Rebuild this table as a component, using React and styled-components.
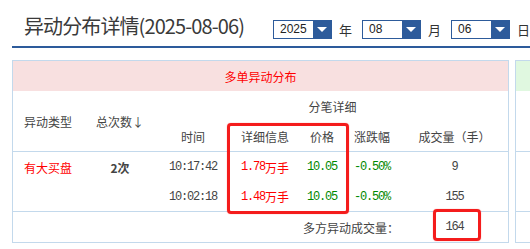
import React from 'react';
import styled, { createGlobalStyle } from 'styled-components';

const GlobalStyle = createGlobalStyle`
    html, body {
        margin: 0;
        padding: 0;
        background: #fff;
        overflow: hidden;
    }
    body {
        width: 530px;
        height: 249px;
        font-family: "Noto Sans CJK SC", sans-serif;
        color: #333;
    }
`;

const BLUE = '#2d5b9b';
const LINE = '#c3d9ec';

const Header = styled.div`
    display: flex;
    align-items: flex-start;
    height: 46px;
    margin-left: 12px;
    padding-left: 12px;
    border-bottom: 2px solid ${BLUE};
    white-space: nowrap;
`;

const Title = styled.h1`
    margin: 12px 0 0;
    font-size: 20px;
    line-height: 28px;
    font-weight: normal;
    letter-spacing: -0.9px;
    color: #3a3a3a;
    font-family: "Noto Sans CJK SC", sans-serif;
`;

const Pickers = styled.div`
    display: flex;
    align-items: center;
    margin: 20px 0 0 29px;
`;

const Select = styled.div`
    box-sizing: border-box;
    display: flex;
    width: 59px;
    height: 19px;
    border: 1px solid ${BLUE};
    background: #fff;
`;

const SelectValue = styled.span`
    flex: 1;
    padding-left: 6px;
    font-family: "Liberation Sans", sans-serif;
    font-size: 12px;
    line-height: 17px;
    color: #222;
`;

const SelectArrow = styled.span`
    width: 18px;
    display: flex;
    align-items: center;
    justify-content: center;
    background: ${BLUE};

    &::after {
        content: '';
        border-left: 5px solid transparent;
        border-right: 5px solid transparent;
        border-top: 5px solid #fff;
    }
`;

const Unit = styled.span`
    font-size: 13px;
    line-height: 19px;
    color: #333;
    margin: 0 10px 0 7px;

    &:last-child {
        margin-right: 0;
    }
`;

const Panels = styled.div`
    display: flex;
    gap: 6px;
    margin: 12px 0 0 12px;
`;

const Panel = styled.div`
    position: relative;
    flex: none;
    box-sizing: border-box;
    width: ${({ width }) => width}px;
    border: 1px solid ${LINE};
`;

const Grid = styled.div`
    display: grid;
    grid-template-columns: 70px 74px 72px 72px 42px 58px 1fr;
    grid-template-rows: 30px 30px 30px 1px 30px 29px 1px 30px;
    font-size: 12px;
    color: #444;
`;

const Caption = styled.div`
    grid-column: 1 / -1;
    grid-row: 1;
    display: flex;
    align-items: center;
    justify-content: center;
    background: ${({ tone }) => tone === 'green' ? '#e0f8e0' : '#f8e0e0'};
    color: #f00;
`;

const Rule = styled.div`
    grid-column: 1 / -1;
    grid-row: ${({ row }) => row};
    background: ${LINE};
`;

const Cell = styled.div`
    display: flex;
    align-items: center;
    justify-content: ${({ align }) => align === 'right' ? 'flex-end' : 'center'};
    white-space: nowrap;
    grid-column: ${({ col }) => col || 'auto'};
    grid-row: ${({ row }) => row || 'auto'};
    padding-right: ${({ align }) => align === 'right' ? '2px' : '0'};
    color: ${({ tone }) => tone === 'red' ? '#f00' : tone === 'green' ? '#080' : '#444'};
    font-weight: ${({ bold }) => bold ? 'bold' : 'normal'};
`;

const Num = styled.span`
    font-family: "Liberation Mono", monospace;
    font-size: 12px;
    letter-spacing: -1.2px;
`;

const Mark = styled.div`
    position: absolute;
    box-sizing: border-box;
    left: ${({ x }) => x}px;
    top: ${({ y }) => y}px;
    width: ${({ w }) => w}px;
    height: ${({ h }) => h}px;
    border: 3px solid #f41c1c;
    border-radius: 4px;
    box-shadow: 0 0 1px rgba(255, 0, 0, 0.6);
    pointer-events: none;
`;

const trades = [
    { time: '10:17:42', amount: '1.78', price: '10.05', change: '-0.50%', volume: '9' },
    { time: '10:02:18', amount: '1.48', price: '10.05', change: '-0.50%', volume: '155' },
];

function Picker({ value, unit }) {
    return (
        <>
            <Select>
                <SelectValue>{value}</SelectValue>
                <SelectArrow />
            </Select>
            <Unit>{unit}</Unit>
        </>
    );
}

export default function App() {
    return (
        <>
            <GlobalStyle />
            <Header>
                <Title>异动分布详情(2025-08-06)</Title>
                <Pickers>
                    <Picker value="2025" unit="年" />
                    <Picker value="08" unit="月" />
                    <Picker value="06" unit="日" />
                </Pickers>
            </Header>
            <Panels>
                <Panel width={497}>
                    <Grid>
                        <Caption>多单异动分布</Caption>
                        <Cell col="1" row="2 / 4">异动类型</Cell>
                        <Cell col="2" row="2 / 4">总次数↓</Cell>
                        <Cell col="3 / 8" row="2">分笔详细</Cell>
                        <Cell col="3" row="3">时间</Cell>
                        <Cell col="4" row="3">详细信息</Cell>
                        <Cell col="5" row="3">价格</Cell>
                        <Cell col="6" row="3">涨跌幅</Cell>
                        <Cell col="7" row="3">成交量（手）</Cell>
                        <Rule row="4" />
                        {trades.map((t, i) => (
                            <React.Fragment key={t.time}>
                                <Cell col="1" row={5 + i} tone="red">{i === 0 ? '有大买盘' : ''}</Cell>
                                <Cell col="2" row={5 + i} bold>{i === 0 ? '2次' : ''}</Cell>
                                <Cell col="3" row={5 + i}><Num>{t.time}</Num></Cell>
                                <Cell col="4" row={5 + i} tone="red"><Num>{t.amount}</Num>万手</Cell>
                                <Cell col="5" row={5 + i} tone="green"><Num>{t.price}</Num></Cell>
                                <Cell col="6" row={5 + i} tone="green"><Num>{t.change}</Num></Cell>
                                <Cell col="7" row={5 + i}><Num>{t.volume}</Num></Cell>
                            </React.Fragment>
                        ))}
                        <Rule row="7" />
                        <Cell col="1 / 7" row="8" align="right">多方异动成交量：</Cell>
                        <Cell col="7" row="8"><Num>164</Num></Cell>
                    </Grid>
                    <Mark x={214} y={62} w={122} h={91} />
                    <Mark x={420} y={148} w={48} h={32} />
                </Panel>
                <Panel width={300}>
                    <Grid>
                        <Caption tone="green" />
                        <Rule row="4" />
                        <Rule row="7" />
                    </Grid>
                </Panel>
            </Panels>
        </>
    );
}
